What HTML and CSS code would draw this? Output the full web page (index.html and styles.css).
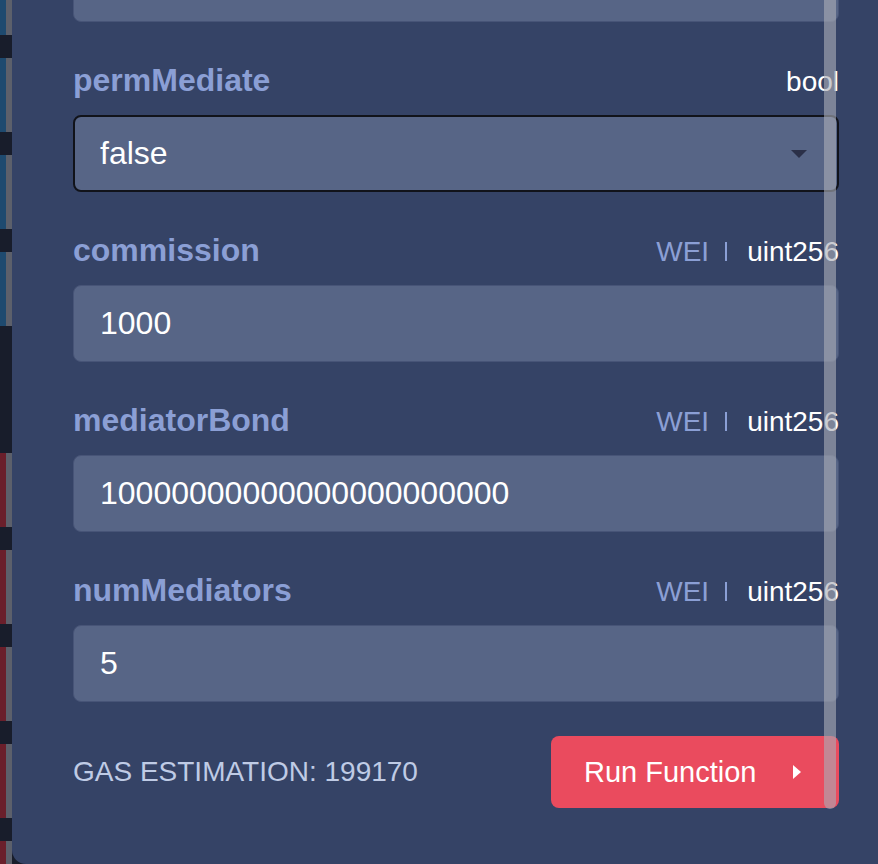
FILE: index.html
```html
<!DOCTYPE html>
<html lang="en">
<head>
    <meta charset="UTF-8">
    <meta name="viewport" content="width=device-width, initial-scale=1.0">
    <title>Run Function</title>
    <link rel="stylesheet" href="styles.css">
</head>
<body>
    <div class="screen">
        <!-- lista de fundo, atras do painel -->
        <div class="backdrop">
            <div class="row blue"></div>
            <div class="row blue"></div>
            <div class="row blue"></div>
            <div class="row blue"></div>
            <div class="row-spacer"></div>
            <div class="row red"></div>
            <div class="row red"></div>
            <div class="row red"></div>
            <div class="row red"></div>
            <div class="row red"></div>
        </div>

        <div class="panel">
            <div class="field">
                <input class="input" type="text" value="">
            </div>

            <div class="field">
                <div class="field-head">
                    <span class="field-name">permMediate</span>
                    <span class="field-type">bool</span>
                </div>
                <div class="select">
                    <span>false</span>
                    <svg width="16" height="8" viewBox="0 0 16 8"><polygon points="0,0 16,0 8,8" fill="#2b3048"/></svg>
                </div>
            </div>

            <div class="field">
                <div class="field-head">
                    <span class="field-name">commission</span>
                    <span class="field-type"><span class="unit">WEI</span><span class="sep"></span>uint256</span>
                </div>
                <input class="input" type="text" value="1000">
            </div>

            <div class="field">
                <div class="field-head">
                    <span class="field-name">mediatorBond</span>
                    <span class="field-type"><span class="unit">WEI</span><span class="sep"></span>uint256</span>
                </div>
                <input class="input" type="text" value="10000000000000000000000">
            </div>

            <div class="field">
                <div class="field-head">
                    <span class="field-name">numMediators</span>
                    <span class="field-type"><span class="unit">WEI</span><span class="sep"></span>uint256</span>
                </div>
                <input class="input" type="text" value="5">
            </div>

            <div class="actions">
                <span class="gas">GAS ESTIMATION: 199170</span>
                <button class="run" type="button">
                    Run Function
                    <svg width="8" height="14" viewBox="0 0 8 14"><polygon points="0,0 8,7 0,14" fill="#fff"/></svg>
                </button>
            </div>
        </div>

        <div class="scrollbar"></div>
    </div>
</body>
</html>
```

FILE: styles.css
```css
body {
    margin: 0;
    padding: 0;
    background-color: #181d2b;
    font-family: "Liberation Sans", Arial, sans-serif;
    overflow: hidden;
}
.screen {
    position: relative;
    display: flex;
    height: 864px;
    overflow: hidden;
}
.backdrop {
    width: 12px;
    flex-shrink: 0;
    display: flex;
    flex-direction: column;
    gap: 23px;
    margin-top: -39px;
}
.row {
    height: 74px;
    flex-shrink: 0;
    box-sizing: border-box;
    border-right: 6px solid #5c606b;
}
.row.blue {
    background-color: #1e4a6f;
}
.row.red {
    background-color: #6a1f2b;
}
.row-spacer {
    height: 81px;
    flex-shrink: 0;
}
.panel {
    flex: 1;
    display: flex;
    flex-direction: column;
    margin-top: -55px;
    padding: 0 39px 56px 61px;
    background-color: #354366;
    border-bottom-left-radius: 14px;
}
.field + .field {
    margin-top: 38px;
}
.field-head {
    display: flex;
    justify-content: space-between;
    align-items: baseline;
    height: 40px;
    line-height: 40px;
    margin-bottom: 15px;
}
.field-name {
    font-size: 32px;
    font-weight: bold;
    color: #8b9fd5;
}
.field-type {
    font-size: 28px;
    color: #fff;
}
.unit {
    color: #8b9fd5;
}
.sep {
    display: inline-block;
    width: 2px;
    height: 19px;
    margin: 0 20px 0 16px;
    background-color: #8b9fd5;
}
.input {
    display: block;
    width: 100%;
    height: 77px;
    box-sizing: border-box;
    padding: 0 26px;
    border: 1px solid #475477;
    border-radius: 8px;
    background-color: #576586;
    color: #fff;
    font-family: "Liberation Sans", Arial, sans-serif;
    font-size: 32px;
    outline: none;
}
.select {
    display: flex;
    justify-content: space-between;
    align-items: center;
    height: 77px;
    box-sizing: border-box;
    padding: 0 30px 0 25px;
    border: 2px solid #11131a;
    border-radius: 8px;
    background-color: #576586;
    color: #fff;
    font-size: 32px;
}
.actions {
    display: flex;
    justify-content: space-between;
    align-items: center;
    margin-top: 34px;
}
.gas {
    font-size: 28px;
    color: #bfcbe5;
}
.run {
    display: flex;
    justify-content: space-between;
    align-items: center;
    width: 288px;
    height: 72px;
    padding: 0 38px 0 33px;
    border: none;
    border-radius: 8px;
    background-color: #ea4b5e;
    color: #fff;
    font-family: "Liberation Sans", Arial, sans-serif;
    font-size: 29px;
    cursor: pointer;
}
.scrollbar {
    position: absolute;
    top: 0;
    left: 824px;
    width: 12px;
    height: 809px;
    background-color: rgba(170, 172, 182, 0.62);
    border-radius: 0 0 6px 6px;
}
```
